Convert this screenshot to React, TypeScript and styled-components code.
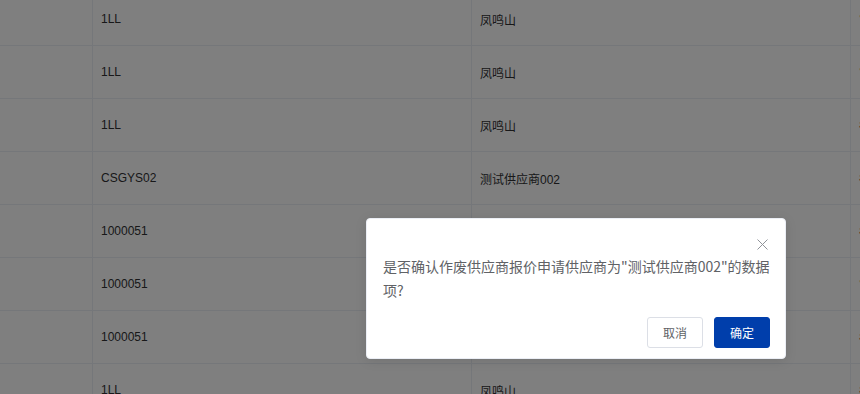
import styled, { createGlobalStyle } from 'styled-components';

const GlobalStyle = createGlobalStyle`
  html, body {
    margin: 0;
    padding: 0;
    overflow: hidden;
    background: #fff;
    font-family: "Liberation Sans", "Noto Sans CJK SC", sans-serif;
  }
`;

const rows = [
  { code: '1LL', name: '凤鸣山', status: '审' },
  { code: '1LL', name: '凤鸣山', status: '审' },
  { code: '1LL', name: '凤鸣山', status: '待' },
  { code: 'CSGYS02', name: '测试供应商002', status: '待' },
  { code: '1000051', name: '青龙山', status: '待' },
  { code: '1000051', name: '青龙山', status: '审' },
  { code: '1000051', name: '青龙山', status: '待' },
  { code: '1LL', name: '凤鸣山', status: '待' },
];

const Page = styled.div`
  position: relative;
  width: 860px;
  height: 394px;
  overflow: hidden;
`;

const Table = styled.div`
  margin-top: -7px;
  display: flex;
  flex-direction: column;
`;

const Row = styled.div`
  display: grid;
  grid-template-columns: 93px 379px 379px 1fr;
  height: 53px;
  border-bottom: 1px solid #ebeef5;
  box-sizing: border-box;
`;

const Cell = styled.div<{ $tone?: string }>`
  display: flex;
  align-items: center;
  padding: 0 8px;
  border-right: 1px solid #ebeef5;
  font-size: 12px;
  color: ${(p) => p.$tone || '#303133'};
  white-space: nowrap;
  overflow: hidden;
  box-sizing: border-box;
`;

const Mask = styled.div`
  position: absolute;
  inset: 0;
  background: rgba(0, 0, 0, 0.5);
`;

const Box = styled.div`
  position: absolute;
  left: 366px;
  top: 218px;
  width: 420px;
  box-sizing: border-box;
  padding-bottom: 10px;
  background: #fff;
  border: 1px solid #ebeef5;
  border-radius: 4px;
  box-shadow: 0 2px 12px rgba(0, 0, 0, 0.1);
  font-family: "Noto Sans CJK SC", "Liberation Sans", sans-serif;
`;

const Header = styled.div`
  height: 25px;
`;

const Close = styled.button`
  position: absolute;
  top: 18px;
  right: 16px;
  width: 14px;
  height: 14px;
  padding: 0;
  border: none;
  background: none;
  display: flex;
  align-items: center;
  justify-content: center;
  cursor: pointer;
`;

const Content = styled.div`
  padding: 10px 15px 10px 16px;
  font-size: 14px;
  line-height: 24px;
  color: #606266;
`;

const Buttons = styled.div`
  display: flex;
  justify-content: flex-end;
  gap: 11px;
  padding: 5px 15px 0;
`;

const Btn = styled.button<{ $primary?: boolean }>`
  width: 56px;
  height: 31px;
  box-sizing: border-box;
  border-radius: 3px;
  font-size: 12px;
  font-family: "Noto Sans CJK SC", sans-serif;
  border: 1px solid ${(p) => (p.$primary ? '#003eab' : '#dcdfe6')};
  background: ${(p) => (p.$primary ? '#003eab' : '#fff')};
  color: ${(p) => (p.$primary ? '#fff' : '#606266')};
  padding: 0;
`;

export default function App() {
  return (
    <Page>
      <GlobalStyle />
      <Table>
        {rows.map((r, i) => (
          <Row key={i}>
            <Cell />
            <Cell>{r.code}</Cell>
            <Cell>{r.name}</Cell>
            <Cell $tone="#c0392b">{r.status}核</Cell>
          </Row>
        ))}
      </Table>
      <Mask />
      <Box>
        <Header />
        <Close aria-label="关闭">
          <svg width="11" height="11" viewBox="0 0 11 11">
            <path d="M0.5 0.5 L10.5 10.5 M10.5 0.5 L0.5 10.5" stroke="#909399" strokeWidth="1" />
          </svg>
        </Close>
        <Content>
          是否确认作废供应商报价申请供应商为"测试供应商002"的数据
          <br />
          项?
        </Content>
        <Buttons>
          <Btn>取消</Btn>
          <Btn $primary>确定</Btn>
        </Buttons>
      </Box>
    </Page>
  );
}
